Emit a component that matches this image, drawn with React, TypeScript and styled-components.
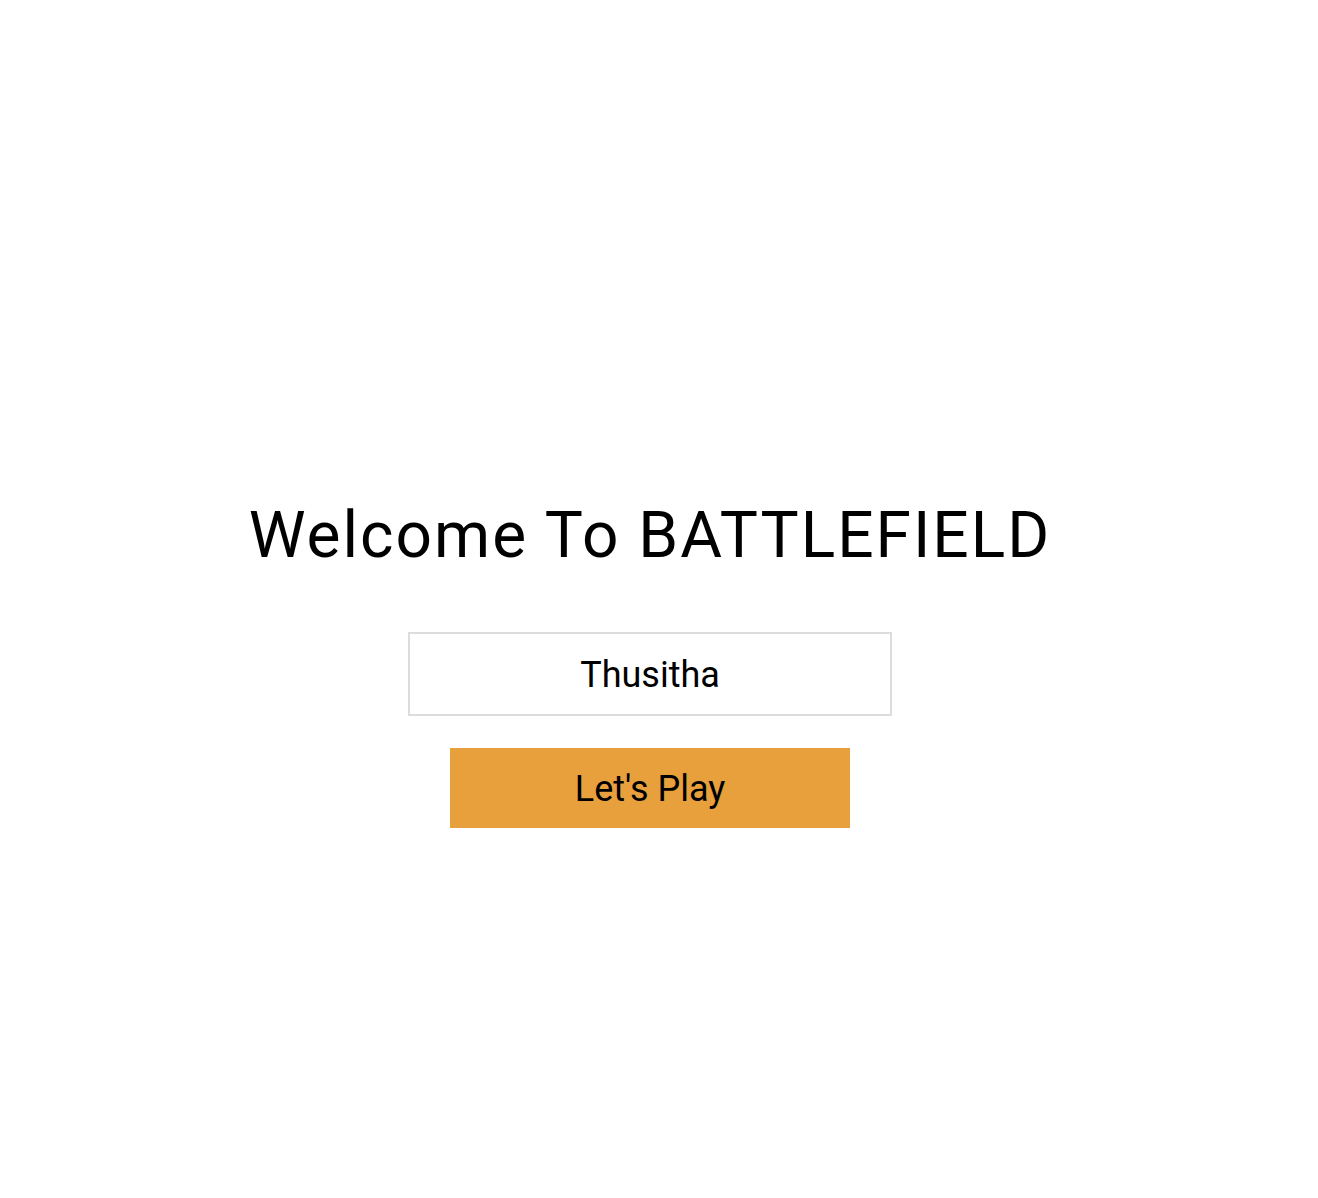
import React from "react";
import styled, { createGlobalStyle } from "styled-components";

const Global = createGlobalStyle`
  html, body { margin: 0; padding: 0; background: #fff; }
  body { font-family: Roboto, "Noto Sans", sans-serif; color: #000; }
`;

const Page = styled.main`
  min-height: 100vh;
  display: flex;
  flex-direction: column;
  align-items: center;
  justify-content: flex-start;
  padding: 498px 18px 0 0;
  box-sizing: border-box;
`;

const Title = styled.h1`
  margin: 0;
  font-weight: 400;
  font-size: 64px;
  line-height: 75px;
  letter-spacing: 2px;
  text-align: center;
`;

const NameInput = styled.input`
  margin-top: 59px;
  width: 484px;
  height: 84px;
  box-sizing: border-box;
  padding: 2px 0 0;
  border: 2px solid #dcdcdc;
  background: #fff;
  text-align: center;
  font-family: Roboto, sans-serif;
  font-size: 36px;
  color: #000;
  outline: none;
`;

const PlayButton = styled.button`
  margin-top: 32px;
  width: 400px;
  height: 80px;
  padding: 2px 0 0;
  border: none;
  background: #e8a03c;
  font-family: Roboto, sans-serif;
  font-size: 36px;
  color: #000;
  cursor: pointer;
`;

export default function App() {
  return (
    <>
      <Global />
      <Page>
        <Title>Welcome To BATTLEFIELD</Title>
        <NameInput defaultValue="Thusitha" />
        <PlayButton>Let's Play</PlayButton>
      </Page>
    </>
  );
}
